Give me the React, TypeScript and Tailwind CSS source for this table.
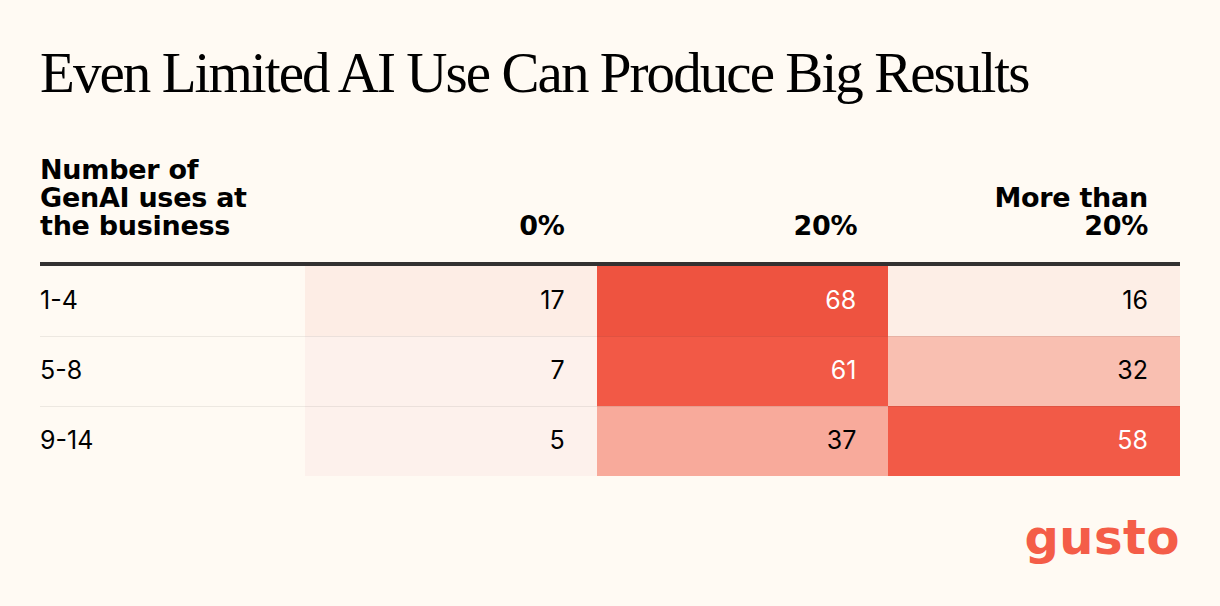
const rows = [
  { label: "1-4", cells: [
    { v: 17, bg: "bg-[#fdede5]", fg: "text-black" },
    { v: 68, bg: "bg-[#ee5340]", fg: "text-white" },
    { v: 16, bg: "bg-[#fdeee6]", fg: "text-black" },
  ] },
  { label: "5-8", cells: [
    { v: 7, bg: "bg-[#fdf1ec]", fg: "text-black" },
    { v: 61, bg: "bg-[#f25946]", fg: "text-white" },
    { v: 32, bg: "bg-[#f9bfb1]", fg: "text-black" },
  ] },
  { label: "9-14", cells: [
    { v: 5, bg: "bg-[#fdf1ec]", fg: "text-black" },
    { v: 37, bg: "bg-[#f8aa9b]", fg: "text-black" },
    { v: 58, bg: "bg-[#f25a47]", fg: "text-white" },
  ] },
];

const head = "font-['DejaVu_Sans',sans-serif] font-bold text-[27px] leading-[28px] tracking-[-0.01em] text-black";

export default function App() {
  return (
    <div className="w-[1220px] h-[606px] bg-[#fffaf3] px-[40px] pt-[42px] overflow-hidden">
      <h1 className="font-['Liberation_Serif',serif] text-[57px] leading-[62px] tracking-[-0.034em] text-black">
        Even Limited AI Use Can Produce Big Results
      </h1>

      {/* header */}
      <div className="grid grid-cols-[265px_1fr_1fr_1fr] items-end mt-[52px] pb-[22px]">
        <div className={head}>
          Number of<br />GenAI uses at<br />the business
        </div>
        <div className={`${head} text-right pr-[32px]`}>0%</div>
        <div className={`${head} text-right pr-[31px]`}>20%</div>
        <div className={`${head} text-right pr-[32px]`}>More than<br />20%</div>
      </div>
      <div className="h-[4px] bg-[#333131]" />

      {/* rows */}
      <div className="flex flex-col">
        {rows.map((r, i) => (
          <div key={i} className="relative grid grid-cols-[265px_1fr_1fr_1fr] h-[70px]">
            {i > 0 && <div className="absolute left-0 right-0 top-0 h-px bg-black/[0.07]" />}
            <div className="flex items-center font-['Inter',sans-serif] text-[25px] text-black">{r.label}</div>
            {r.cells.map((c, j) => (
              <div key={j} className={`${c.bg} ${c.fg} flex items-center justify-end pr-[32px] font-['Inter',sans-serif] text-[25px]`}>
                {c.v}
              </div>
            ))}
          </div>
        ))}
      </div>

      <div className="flex justify-end mt-[36px]">
        <span className="font-['DejaVu_Sans',sans-serif] font-bold text-[48px] leading-[50px] tracking-[0.5px] text-[#f45d48]">gusto</span>
      </div>
    </div>
  );
}
